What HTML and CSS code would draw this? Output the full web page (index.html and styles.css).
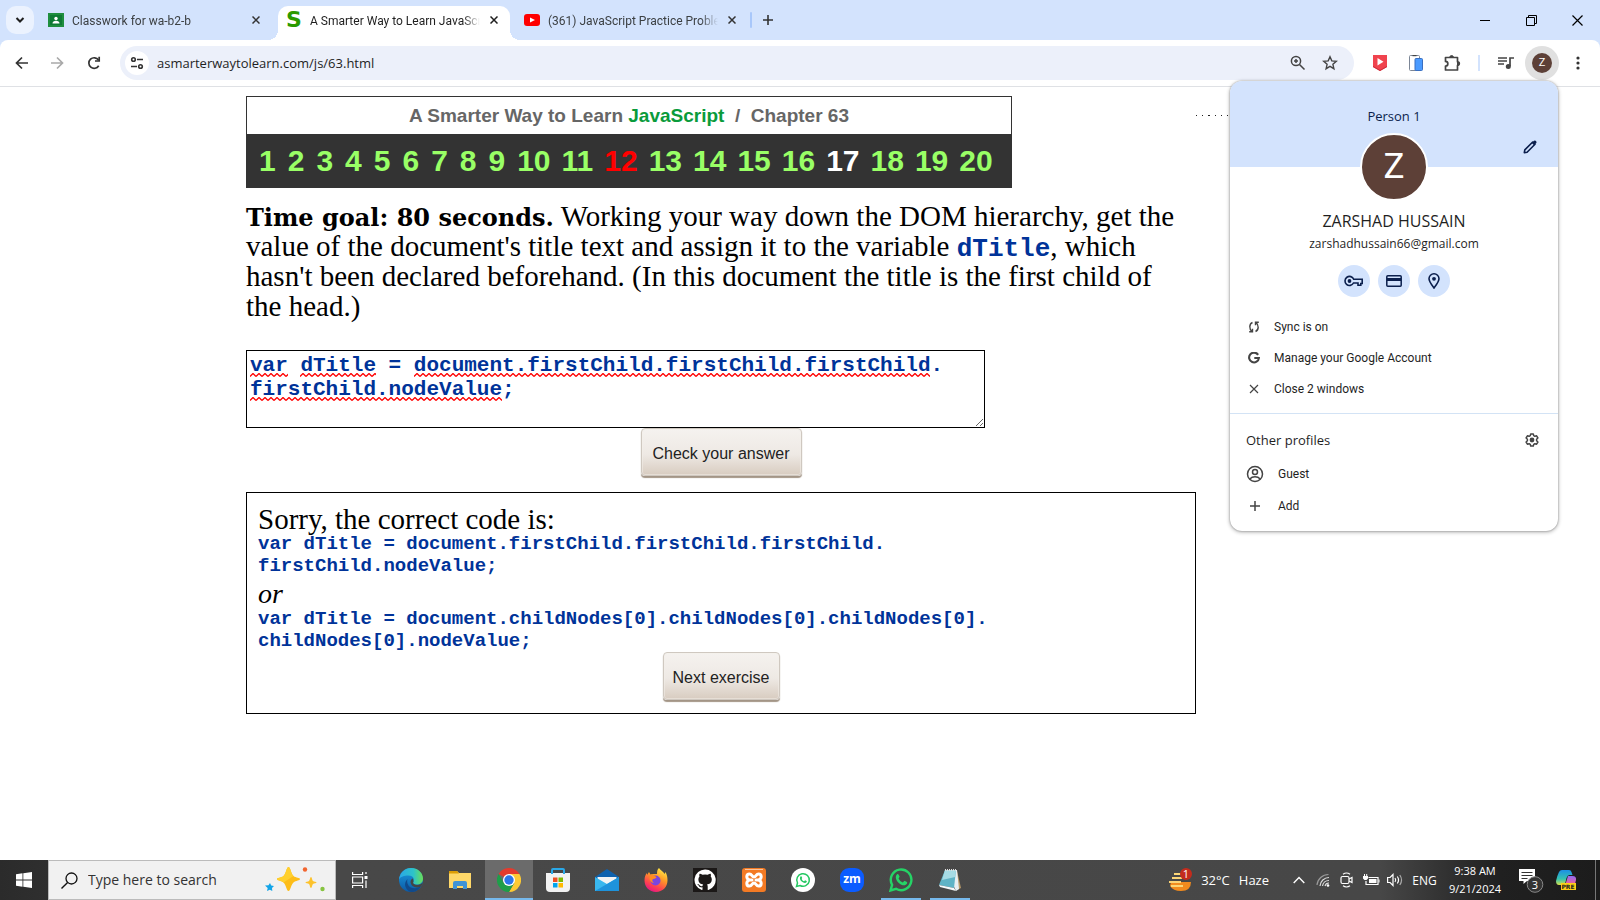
FILE: index.html
```html
<!DOCTYPE html>
<html lang="en">
<head>
<meta charset="utf-8">
<title>A Smarter Way to Learn JavaScript</title>
<link rel="stylesheet" href="styles.css">
</head>
<body>
<header class="browser">
  <div class="tabstrip">
    <button class="tab-search" aria-label="Search tabs"><svg width="10" height="8" viewBox="0 0 10 8"><path d="M1.500 2l3.500 3.500L8.500 2" fill="none" stroke="#1f1f1f" stroke-width="2"/></svg></button>
    <div class="tab">
      <svg width="16" height="16" viewBox="0 0 16 16"><path d="M0 1h16v14H0z" fill="#1e8e3e"/><path d="M2 3h12v10H2z" fill="#0f7a35"/><circle cx="8" cy="6.500" r="1.700" fill="#fff"/><path d="M4.500 11.500c0-2 1.500-2.800 3.500-2.800s3.500.8 3.500 2.800z" fill="#fff"/></svg>
      <span class="tab-title">Classwork for wa-b2-b</span>
      <button class="tab-close" aria-label="Close tab"><svg width="8" height="8" viewBox="0 0 8 8"><path d="M.5.5l7 7m0-7l-7 7" stroke="#333" stroke-width="1.500"/></svg></button>
    </div>
    <div class="tab tab-active">
      <span class="favicon-s" aria-hidden="true">S</span>
      <span class="tab-title">A Smarter Way to Learn JavaScript</span>
      <button class="tab-close" aria-label="Close tab"><svg width="8" height="8" viewBox="0 0 8 8"><path d="M.5.5l7 7m0-7l-7 7" stroke="#1f1f1f" stroke-width="1.500"/></svg></button>
    </div>
    <div class="tab">
      <svg width="16" height="16" viewBox="0 0 16 16"><rect y="2" width="16" height="12" rx="3" fill="#f00"/><path d="M6 5.500l5 2.500-5 2.500z" fill="#fff"/></svg>
      <span class="tab-title">(361) JavaScript Practice Problems</span>
      <button class="tab-close" aria-label="Close tab"><svg width="8" height="8" viewBox="0 0 8 8"><path d="M.5.5l7 7m0-7l-7 7" stroke="#333" stroke-width="1.500"/></svg></button>
    </div>
    <span class="tab-divider"></span>
    <button class="new-tab" aria-label="New tab"><svg width="10" height="10" viewBox="0 0 10 10"><path d="M5 0v10M0 5h10" stroke="#333" stroke-width="1.600"/></svg></button>
    <div class="window-controls">
      <button aria-label="Minimize"><svg width="10" height="10" viewBox="0 0 10 10"><path d="M0 5.500h10" stroke="#000"/></svg></button>
      <button aria-label="Restore"><svg width="11" height="11" viewBox="0 0 11 11"><path d="M.5 2.500h8v8h-8zM2.500 2V.5h8v8H9" fill="none" stroke="#000"/></svg></button>
      <button aria-label="Close"><svg width="11" height="11" viewBox="0 0 11 11"><path d="M.5.5l10 10m0-10l-10 10" stroke="#000" stroke-width="1.200"/></svg></button>
    </div>
  </div>
  <div class="toolbar">
    <div class="nav">
      <button aria-label="Back"><svg width="14" height="14" viewBox="0 0 14 14"><path d="M13 7H2M7 1.500L1.500 7 7 12.500" fill="none" stroke="#333" stroke-width="1.700"/></svg></button>
      <button aria-label="Forward"><svg width="14" height="14" viewBox="0 0 14 14"><path d="M1 7h11M7 1.500L12.500 7 7 12.500" fill="none" stroke="#a9a9a9" stroke-width="1.700"/></svg></button>
      <button class="reload" aria-label="Reload"><svg width="14" height="14" viewBox="0 0 14 14"><path d="M11.700 9.800A5.300 5.300 0 1 1 11.500 4" fill="none" stroke="#333" stroke-width="1.700"/><path d="M12.200.8V5H8" fill="none" stroke="#333" stroke-width="1.700"/></svg></button>
    </div>
    <div class="omnibox">
      <button class="site-info" aria-label="View site information"><svg width="14" height="14" viewBox="0 0 14 14"><g fill="none" stroke="#333" stroke-width="1.600"><circle cx="3.500" cy="3.500" r="1.800"/><path d="M7 3.500h6M1 10.500h6"/><circle cx="10.500" cy="10.500" r="1.800"/></g></svg></button>
      <input class="url" type="text" aria-label="Address" value="asmarterwaytolearn.com/js/63.html">
      <button aria-label="Zoom"><svg width="16" height="16" viewBox="0 0 16 16"><g fill="none" stroke="#444" stroke-width="1.500"><circle cx="6" cy="6" r="4.600"/><path d="M9.500 9.500l5 5M4 6h4M6 4v4"/></g></svg></button>
      <button aria-label="Bookmark this tab"><svg width="16" height="16" viewBox="0 0 16 16"><path d="M8 1.800l1.800 4.100 4.500.4-3.400 3 1 4.400L8 11.400l-3.900 2.300 1-4.400-3.400-3 4.500-.4z" fill="none" stroke="#444" stroke-width="1.400"/></svg></button>
    </div>
    <div class="extensions">
      <button aria-label="Video extension"><svg width="16" height="16" viewBox="0 0 16 16"><path d="M1 0h14v12l-7 4-7-4z" fill="#f0434e"/><path d="M1 11l7 4 7-4v1l-7 4-7-4z" fill="#c92a3a"/><path d="M5.500 3l6 3.700-6 3.700z" fill="#fff"/></svg></button>
      <button aria-label="Mobile view extension"><svg width="16" height="16" viewBox="0 0 16 16"><rect x="1.500" y=".5" width="10" height="15" rx="1" fill="#fff" stroke="#7c8696"/><path d="M4.500.5h4" stroke="#444" stroke-width="1.400"/><rect x="7" y="3.500" width="7.500" height="12" rx="1" fill="#4b9bff" stroke="#3a6fc0"/></svg></button>
      <button aria-label="Extensions"><svg width="18" height="18" viewBox="0 0 18 18"><path d="M2.500 3.500h12v4.300a1.600 1.600 0 0 1 0 3.600V16h-12v-3.900a2.200 2.200 0 0 0 0-4.700z" fill="none" stroke="#444" stroke-width="1.700" stroke-linejoin="round"/><path d="M6.700 3.500a1.900 1.900 0 0 1 3.800 0zM14.500 7.800a1.900 1.900 0 0 1 0 3.700z" fill="#444" stroke="#444"/></svg></button>
      <span class="toolbar-divider"></span>
      <button aria-label="Media controls"><svg width="16" height="14" viewBox="0 0 16 14"><path d="M0 2h9M0 5h9M0 8h6" stroke="#444" stroke-width="1.600"/><path d="M12 10V2h4" fill="none" stroke="#444" stroke-width="1.700"/><circle cx="10.300" cy="10.500" r="2.500" fill="#444"/></svg></button>
      <button class="profile" aria-label="Profile"><span class="avatar-small">Z</span></button>
      <button aria-label="Menu"><svg width="4" height="14" viewBox="0 0 4 14"><g fill="#333"><circle cx="2" cy="2" r="1.600"/><circle cx="2" cy="7" r="1.600"/><circle cx="2" cy="12" r="1.600"/></g></svg></button>
    </div>
  </div>
</header>

<main class="page">
  <div class="lesson">
    <section class="chapter">
      <h1 class="chapter-title">A Smarter Way to Learn <span class="js">JavaScript</span> &nbsp;/&nbsp; Chapter 63</h1>
      <nav class="exercises">
        <a class="digit" href="#1">1</a><a class="digit" href="#2">2</a><a class="digit" href="#3">3</a><a class="digit" href="#4">4</a><a class="digit" href="#5">5</a><a class="digit" href="#6">6</a><a class="digit" href="#7">7</a><a class="digit" href="#8">8</a><a class="digit" href="#9">9</a><a href="#10">10</a><a href="#11">11</a><a href="#12" class="missed">12</a><a href="#13">13</a><a href="#14">14</a><a href="#15">15</a><a href="#16">16</a><a href="#17" class="current">17</a><a href="#18">18</a><a href="#19">19</a><a href="#20">20</a>
      </nav>
    </section>
    <p class="question"><label for="answer"><b>Time goal: 80 seconds.</b> Working your way down the DOM hierarchy, get the value of the document's title text and assign it to the variable <code>dTitle</code>, which hasn't been declared beforehand. (In this document the title is the first child of the head.)</label></p>
    <div class="answer-field">
      <textarea id="answer" class="answer" rows="3">var dTitle = document.firstChild.firstChild.firstChild.
firstChild.nodeValue;</textarea>
      <div class="spelling" aria-hidden="true">
        <div class="spelling-line"><i class="w3"></i><i class="w6"></i><i></i><i class="w41"></i></div>
        <div class="spelling-line"><i class="w20"></i></div>
      </div>
    </div>
    <button class="stone check">Check your answer</button>
    <section class="result">
      <p>Sorry, the correct code is:</p>
      <pre>var dTitle = document.firstChild.firstChild.firstChild.
firstChild.nodeValue;</pre>
      <p><em>or</em></p>
      <pre>var dTitle = document.childNodes[0].childNodes[0].childNodes[0].
childNodes[0].nodeValue;</pre>
      <button class="stone next">Next exercise</button>
    </section>
  </div>
  <svg class="dots" width="40" height="2" viewBox="0 0 40 2"><path d="M0 .5h1M6 .5h1M12 .5h2M19 .5h1M25 .5h1M31 .5h1" stroke="#222" stroke-width="1"/></svg>
</main>

<aside class="popup">
  <div class="popup-head">
    <span>Person 1</span>
    <button class="edit" aria-label="Edit profile"><svg width="14" height="14" viewBox="0 0 14 14"><path d="M1.300 12.700l.5-2.800L9.700 2l2.300 2.300-7.900 7.900z" fill="none" stroke="#0b1f4d" stroke-width="1.600" stroke-linejoin="round"/><path d="M8.800 2.900L11 .7q.8-.6 1.600.1l.7.7q.5.700 0 1.500l-2.200 2.200z" fill="#0b1f4d"/></svg></button>
  </div>
  <div class="avatar">Z</div>
  <div class="name">ZARSHAD HUSSAIN</div>
  <div class="email">zarshadhussain66@gmail.com</div>
  <div class="shortcuts">
    <button aria-label="Passwords"><svg width="20" height="12" viewBox="0 0 20 12"><g fill="none" stroke="#0b1f4d" stroke-width="1.600"><path d="M9.700 4.300H18.200V8.500h-1.400v1.700h-2.800V8H9.500A4.500 4.500 0 1 1 9.700 4.300z"/></g><circle cx="5.500" cy="6" r="1.900" fill="#0b1f4d"/></svg></button>
    <button aria-label="Payment methods"><svg width="16" height="12" viewBox="0 0 16 12"><rect x=".8" y=".8" width="14.400" height="10.400" rx="1" fill="none" stroke="#0b1f4d" stroke-width="1.500"/><path d="M1 3h14v3H1z" fill="#0b1f4d"/></svg></button>
    <button aria-label="Addresses"><svg width="12" height="16" viewBox="0 0 12 16"><path d="M6 15C3 11 1 8.500 1 5.800a5 5 0 0 1 10 0C11 8.500 9 11 6 15z" fill="none" stroke="#0b1f4d" stroke-width="1.600"/><circle cx="6" cy="5.800" r="1.900" fill="#0b1f4d"/></svg></button>
  </div>
  <div class="menu">
    <button><svg width="12" height="12" viewBox="0 0 12 12"><g fill="none" stroke="#444" stroke-width="1.400"><path d="M4.500 1.500C1 3 1 8 4 10.500M4.500 7.800v3H1.200M7.500 10.500C11 9 11 4 8 1.500M7.500 4.200v-3h3.300"/></g></svg>Sync is on</button>
    <button><svg width="12" height="12" viewBox="0 0 12 12"><path d="M10.100 2.800A4.900 4.900 0 1 0 10.900 6H6.300" fill="none" stroke="#444" stroke-width="2.100"/></svg>Manage your Google Account</button>
    <button><svg width="12" height="12" viewBox="0 0 12 12"><path d="M2 2l8 8m0-8l-8 8" stroke="#444" stroke-width="1.200"/></svg>Close 2 windows</button>
  </div>
  <div class="others">
    <div class="others-head"><span>Other profiles</span><button aria-label="Manage profiles"><svg width="14" height="14" viewBox="0 0 14 14"><path d="M5.700.9h2.600l.4 1.700 1.200.7 1.700-.5 1.300 2.200L11.600 6.200v1.600l1.300 1.200-1.300 2.200-1.700-.5-1.200.7-.4 1.700H5.700l-.4-1.700-1.200-.7-1.700.5L1.100 9l1.300-1.200V6.200L1.100 5l1.300-2.200 1.700.5 1.200-.7z" fill="none" stroke="#444" stroke-width="1.500" stroke-linejoin="round"/><circle cx="7" cy="7" r="2.400" fill="#444"/></svg></button></div>
    <button class="other"><svg width="18" height="18" viewBox="0 0 18 18"><g fill="none" stroke="#444" stroke-width="1.500"><circle cx="9" cy="9" r="7.500"/><circle cx="9" cy="7" r="2.500"/><path d="M3.800 14c2.700-3 7.700-3 10.400 0"/></g></svg>Guest</button>
    <button class="other"><svg width="18" height="18" viewBox="0 0 18 18"><path d="M9 4v10M4 9h10" stroke="#444" stroke-width="1.500"/></svg>Add</button>
  </div>
</aside>

<footer class="taskbar">
  <button class="start" aria-label="Start"><svg width="16" height="16" viewBox="0 0 16 16"><path d="M0 2.200l6.500-.9v6.200H0zM7.300 1.200L16 0v7.500H7.300zM0 8.400h6.500v6.300L0 13.800zM7.300 8.400H16V16l-8.700-1.200z" fill="#fff"/></svg></button>
  <div class="search">
    <svg width="17" height="17" viewBox="0 0 17 17"><circle cx="10.500" cy="6.500" r="5.500" fill="none" stroke="#111" stroke-width="1.300"/><path d="M6.600 10.400L.5 16.500" stroke="#111" stroke-width="1.400"/></svg>
    <input type="text" aria-label="Search" placeholder="Type here to search">
    <svg width="60" height="26" viewBox="0 0 60 26"><path d="M23.500 0c2 0 2.500 7 5 9s6.500 1.500 6.500 3-4 1.500-6.500 3.500-3 8.500-5 8.500-2.500-6.500-5-8.500-6.500-2-6.500-3.500 4-1 6.500-3 3-9 5-9z" fill="#fdbd18"/><path d="M23.500 0c2 0 2.500 7 5 9l-10 6.500c-2.500-2-6.500-2-6.500-3.500s4-1 6.500-3 3-9 5-9z" fill="#ffd02e"/><path d="M46 10c1 0 1 3 2 4s3.500.5 3.500 1.500-2.500.5-3.500 1.500-1 4-2 4-1-3-2-4-3.500-.5-3.500-1.500 2.500-.5 3.500-1.500 1-4 2-4z" fill="#fcc22c"/><path d="M5 16l1.200 2.600 2.800.4-2 2 .3 3-2.500-1.300L2 24l.7-3L0 18.500l3.500-.3z" fill="#12a4e8"/><circle cx="40" cy="2.500" r="2.200" fill="#f2652f"/><circle cx="57.500" cy="22" r="2.200" fill="#86c440"/></svg>
  </div>
  <nav class="apps">
    <button class="taskview" aria-label="Task View"><svg width="16" height="16" viewBox="0 0 16 16"><g fill="none" stroke="#fff" stroke-width="1.200"><path d="M.6 0v2.500h10V0M.6 16v-2.500h10V16M.6 5h10v6H.6zM14 0v2M14 8.500V16"/></g><path d="M12.500 4h3v3h-3z" fill="#fff"/></svg></button>
    <button aria-label="Edge"><svg width="24" height="24" viewBox="0 0 24 24"><defs><linearGradient id="ea" x1="0" x2="1"><stop offset="0" stop-color="#2aa7e8"/><stop offset=".6" stop-color="#2dc3c9"/><stop offset="1" stop-color="#6adf57"/></linearGradient><linearGradient id="eb" x1="0" y1="0" x2="0" y2="1"><stop offset="0" stop-color="#1b9de2"/><stop offset="1" stop-color="#0c59a4"/></linearGradient></defs><circle cx="12" cy="12" r="12" fill="url(#eb)"/><path d="M0 11.500C1 4.500 6 0 12 0c7 0 12 5 12 10.500 0 4-3 6-6 6-3.500 0-4.500-1.500-3.800-2.500 1.300-2 .8-6.500-4.700-6.500-4.500 0-8 1-9.500 4z" fill="url(#ea)"/><path d="M8.500 11c-1.500 5 2 10.500 9 9 2-.5 3-1 4.500-2-2 4-6 6-10 6-5-1.500-8.500-8-3.500-13z" fill="#114a8b"/><path d="M14.500 13.500c-1.500 3 3 4.500 7.500 2.500l1.700-1.500-1.200 3.500C18 21 12 19 11.500 14c0-2 1.500-3.500 2.500-3.500z" fill="#444"/></svg></button>
    <button aria-label="File Explorer"><svg width="22" height="18" viewBox="0 0 22 18"><path d="M0 0h8l2 2h12v15H0z" fill="#ffd869"/><path d="M0 0h8l2 2.500H0z" fill="#dd9d05"/><path d="M4 18v-6q0-2 2-2h10q2 0 2 2v6h-4v-3H8v3z" fill="#3f93d6"/></svg></button>
    <button class="app-active" aria-label="Chrome"><svg width="24" height="24" viewBox="0 0 24 24"><path d="M12 12L1.600 6A12 12 0 0 1 22.400 6z" fill="#e33b2e"/><path d="M12 12V6h10.400A12 12 0 0 1 12 24l5.200-9z" fill="#fcc934"/><path d="M12 12l5.200 3L12 24A12 12 0 0 1 1.600 6l5.200 9z" fill="#1e9e49"/><circle cx="12" cy="12" r="6" fill="#fff"/><circle cx="12" cy="12" r="4.700" fill="#2a76ea"/></svg></button>
    <button aria-label="Microsoft Store"><svg width="24" height="24" viewBox="0 0 24 24"><path d="M0 5h24v15q0 4-4 4H4q-4 0-4-4z" fill="#f2f2f2"/><path d="M6 6V2q0-1 1-1h10q1 0 1 1v4" fill="none" stroke="#2aa8e8" stroke-width="2"/><path d="M7 9.500h4.500V14H7z" fill="#f25022"/><path d="M12.500 9.500H17V14h-4.500z" fill="#7fba00"/><path d="M7 15h4.500v4.500H7z" fill="#00a4ef"/><path d="M12.500 15H17v4.500h-4.500z" fill="#ffb900"/></svg></button>
    <button aria-label="Mail"><svg width="24" height="22" viewBox="0 0 24 22"><path d="M0 8L12 0l12 8v4H0z" fill="#0f62ae"/><path d="M2.500 8h19v8h-19z" fill="#f3f3f3"/><path d="M0 8l12 7L24 8v14H0z" fill="#39b7ee"/><path d="M0 22L24 8v14z" fill="#1e93dc"/></svg></button>
    <button aria-label="Firefox"><svg width="24" height="24" viewBox="0 0 24 24"><defs><linearGradient id="fx" x1=".8" y1="0" x2=".3" y2="1"><stop offset="0" stop-color="#fff14a"/><stop offset=".4" stop-color="#ff9a26"/><stop offset=".75" stop-color="#ff4150"/><stop offset="1" stop-color="#e31587"/></linearGradient></defs><path d="M15 0c1 2 5 4 5.500 6l1-2C23 7 23.500 9 23.500 12.500 23.500 19 18.500 24 12 24S.5 19 .5 12.500C.5 9 1.500 6.500 3 5v2l2-3 1.500 2.500C8 5.500 12 6 13 6c0-3 .5-5 2-6z" fill="url(#fx)"/><circle cx="11.500" cy="12.500" r="5" fill="#7a45e0"/><path d="M6 7.500c3-1 6 .5 6.500 2-1 1.500-3 1-4 2-.5 1 0 2.500 1.500 3.500-3.500 0-5.500-4-4-7.500z" fill="#ff8c22"/></svg></button>
    <button aria-label="GitHub"><svg width="24" height="24" viewBox="0 0 24 24"><path d="M0 0h24v24H0z" fill="#1b1817"/><path d="M12 1.500A10.500 10.500 0 0 0 8.800 22c.5.1.700-.2.700-.5v-2.200c-3 .6-3.600-1.200-3.600-1.200-.5-1.200-1.200-1.500-1.200-1.500-1-.7.100-.7.100-.7 1 .1 1.600 1.100 1.600 1.100 1 1.600 2.500 1.200 3.100.9.100-.7.400-1.200.7-1.400-2.300-.3-4.800-1.200-4.800-5.200 0-1.200.4-2.100 1.100-2.800-.1-.3-.5-1.400.1-2.800 0 0 .9-.3 2.900 1.100a10 10 0 0 1 5.200 0c2-1.400 2.900-1.100 2.900-1.100.6 1.400.2 2.500.1 2.800.7.7 1.100 1.600 1.100 2.800 0 4-2.500 4.900-4.800 5.200.4.300.7 1 .7 1.900v3c0 .4.200.7.700.6A10.500 10.500 0 0 0 12 1.500z" fill="#fff"/></svg></button>
    <button aria-label="XAMPP"><svg width="24" height="24" viewBox="0 0 24 24"><rect width="24" height="24" rx="3" fill="#f37a24"/><path d="M3 1.500h18" stroke="#fbc49a"/><g fill="none" stroke="#fff" stroke-width="3" stroke-linecap="round" stroke-linejoin="round"><path d="M7 12C4 10.500 4 6 7.500 6c2.500 0 2.500 3 4.500 3s2-3 4.500-3C20 6 20 10.500 17 12c3 1.500 3 6-.5 6-2.500 0-2.500-3-4.500-3s-2 3-4.500 3C4 18 4 13.500 7 12z"/><path d="M7 12h3M17 12h-3"/></g></svg></button>
    <button aria-label="WhatsApp Web"><svg width="24" height="24" viewBox="0 0 24 24"><circle cx="12" cy="12" r="12" fill="#fff"/><path d="M5.500 18.500l1-3.500a6.300 6.300 0 1 1 2.500 2.500z" fill="none" stroke="#25c862" stroke-width="1.500"/><path d="M9.500 8.500c.7-.7 1.200-.1 1.700 1.400l-.6 1c.6 1.200 1.300 1.900 2.500 2.400l1-1c1.500.6 2 1 1.600 1.700-1 1.700-3.300 1.200-5-.4-1.600-1.500-2.400-3.600-1.200-5.100z" fill="#25c862"/></svg></button>
    <button aria-label="Zoom Workplace"><span class="zm">zm</span></button>
    <button class="app-open" aria-label="WhatsApp"><svg width="24" height="24" viewBox="0 0 24 24"><path d="M1.500 22.500l1.600-5.700a10.300 10.300 0 1 1 4 4z" fill="none" stroke="#25d366" stroke-width="2.400"/><path d="M7.800 6.400c1.100-1.100 1.900-.2 2.800 2.400l-1 1.600c1 2 2.200 3.100 4.200 4l1.600-1.700c2.500 1 3.300 1.600 2.700 2.800-1.600 2.800-5.500 2-8.300-.6-2.700-2.500-4-6-2-8.500z" fill="#25d366"/></svg></button>
    <button class="app-open" aria-label="Notepad"><svg width="24" height="24" viewBox="0 0 24 24"><path d="M19 3l4 17-4 2z" fill="#b99a6a"/><path d="M8 2h11l2 19-3 2z" fill="#e8eef2"/><path d="M7 2h11l-2 18L1 17z" fill="#5fb3c6"/><path d="M7 2h11l-.8 7L4 12z" fill="#a6dbe4"/><path d="M1 17l15 3 2 3L2 19z" fill="#f4f8fa"/><path d="M7 2h12" stroke="#ddd" stroke-width="2" stroke-dasharray="1 1"/></svg></button>
  </nav>
  <div class="tray">
    <button class="weather"><svg width="24" height="24" viewBox="0 0 24 24"><path d="M3 14h20q0 9-10 9Q5 23 2 18z" fill="#f28b1e"/><path d="M6 6h9M4 10h10M1 14h12M3 18h12" stroke="#fbd577" stroke-width="2"/><circle cx="18" cy="6" r="6" fill="#c42b1c"/><text x="18" y="10" class="badge-text">1</text></svg><span>32°C</span><span>Haze</span></button>
    <button class="tray-cell" aria-label="Show hidden icons"><svg width="12" height="8" viewBox="0 0 12 8"><path d="M.7 7L6 1.500 11.300 7" fill="none" stroke="#fff" stroke-width="1.400"/></svg></button>
    <button class="tray-cell" aria-label="Network"><svg width="14" height="14" viewBox="0 0 14 14"><g fill="none" stroke-width="1.200"><path d="M1 12A11.500 11.500 0 0 1 12.500 1.500" stroke="#999"/><path d="M4 13A9 9 0 0 1 13 4.500M6.500 13A6.500 6.500 0 0 1 13 7.500M9 13a4 4 0 0 1 4-3" stroke="#ddd"/></g><circle cx="12" cy="12.500" r="1.300" fill="#fff"/></svg></button>
    <button class="tray-cell" aria-label="Meet Now"><svg width="14" height="16" viewBox="0 0 14 16"><g fill="none" stroke="#fff" stroke-width="1.200"><rect x="1" y="4.500" width="8" height="7" rx="1.500"/><path d="M9 7l3-1.500v5L9 9M3 2.200Q6.500-.2 10 2.200M3 13.800q3.500 2.400 7 0"/></g></svg></button>
    <button class="tray-cell" aria-label="Battery"><svg width="17" height="12" viewBox="0 0 17 12"><path d="M5.500 3.500H15v7H3V7" fill="none" stroke="#fff" stroke-width="1.200"/><path d="M6 5h7.500v4H6zM15.500 5.500h1v3h-1zM0 2h5v2.500L3.500 6h-2L0 4.500zM1 0h1v2H1zM3.200 0h1v2h-1z" fill="#fff"/></svg></button>
    <button class="tray-cell" aria-label="Volume"><svg width="16" height="14" viewBox="0 0 16 14"><path d="M.6 4.500h2.500L6 1.500v11L3.100 9.500H.6zM8 5q1.500 2 0 4M10.300 3.500q2.500 3.500 0 7" fill="none" stroke="#fff" stroke-width="1.200"/><path d="M12.800 2q3.500 5 0 10" fill="none" stroke="#aaa" stroke-width="1.200"/></svg></button>
    <button class="lang">ENG</button>
    <button class="clock"><span>9:38 AM</span><span>9/21/2024</span></button>
    <button class="notifications" aria-label="3 notifications"><svg width="26" height="26" viewBox="0 0 26 26"><path d="M1 2h16v12H9l-3.500 3v-3H1z" fill="#fff"/><path d="M3.500 5.500h11M3.500 8.500h11M3.500 11.500h6" stroke="#333" stroke-width="1"/><circle cx="17" cy="17.500" r="7.800" fill="#333" stroke="#888"/><text x="17" y="21.500" class="badge-text">3</text></svg></button>
    <button class="copilot" aria-label="Copilot"><svg width="22" height="20" viewBox="0 0 22 20"><defs><linearGradient id="ca" x1="0" y1="0" x2="0" y2="1"><stop offset="0" stop-color="#1c8fe6"/><stop offset=".6" stop-color="#35c2b0"/><stop offset="1" stop-color="#d8e24a"/></linearGradient><linearGradient id="cb" x1="0" y1="0" x2="0" y2="1"><stop offset="0" stop-color="#8f6bf2"/><stop offset="1" stop-color="#f0609a"/></linearGradient></defs><path d="M6 0h7q2 0 2.500 2l1 3h-3q-2 0-3 3l-1 4q-.5 3-3 3H3q-3 0-3-4 1-5 3-9 1-2 3-2z" fill="url(#ca)"/><path d="M12 6h4.500q4 0 3.500 4l-1 4H9.500z" fill="url(#cb)"/><path d="M5 13h15v7H5z" fill="#ffcf17"/><text x="12" y="19" class="pre">PRE</text></svg></button>
    <span class="show-desktop"></span>
  </div>
</footer>
</body>
</html>
```
FILE: styles.css
```css
* { box-sizing: border-box; }
body {
  margin: 0;
  min-height: 100vh;
  display: flex;
  flex-direction: column;
  position: relative;
  background: #fff;
  font-family: "Open Sans", "Noto Sans", sans-serif;
  font-size: 12px;
  color: #1f1f1f;
}
button {
  border: 0;
  padding: 0;
  margin: 0;
  background: none;
  color: inherit;
  font: inherit;
  display: flex;
  align-items: center;
  justify-content: center;
  flex-shrink: 0;
}
svg { display: block; flex-shrink: 0; }

/* Browser frame */
.browser { background: #d3e3fd; }
.tabstrip { display: flex; height: 40px; padding: 6px 0 0 6px; gap: 6px; }
.tab-search { width: 28px; height: 28px; border-radius: 10px; background: #ebf2fe; }
.tab {
  position: relative;
  display: flex;
  align-items: center;
  gap: 8px;
  width: 232px;
  height: 34px;
  padding: 0 10px 6px 8px;
  font-family: Roboto, "Open Sans", sans-serif;
  color: #3c4043;
}
.tab-active { background: #fff; border-radius: 10px 10px 0 0; color: #1f1f1f; }
.tab-active::before, .tab-active::after {
  content: "";
  position: absolute;
  bottom: 0;
  width: 10px;
  height: 10px;
}
.tab-active::before { left: -10px; background: radial-gradient(circle at 0 0, transparent 10px, #fff 10px); }
.tab-active::after { right: -10px; background: radial-gradient(circle at 100% 0, transparent 10px, #fff 10px); }
.tab-title {
  flex: 1;
  overflow: hidden;
  padding-top: 2px;
  white-space: nowrap;
  -webkit-mask-image: linear-gradient(90deg, #000 90%, transparent);
  mask-image: linear-gradient(90deg, #000 90%, transparent);
}
.tab-close { width: 12px; height: 16px; }
.favicon-s {
  width: 16px;
  font: bold 22px/16px "DejaVu Sans", sans-serif;
  color: #2a9a00;
}
.tab-divider { width: 2px; height: 16px; margin: 6px 6px 0 -4px; background: #a8c7fa; border-radius: 1px; align-self: flex-start; }
.new-tab { width: 20px; height: 28px; margin-left: -6px; }
.window-controls { display: flex; margin: -6px 0 0 auto; }
.window-controls button { width: 46px; height: 40px; }

.toolbar {
  display: flex;
  align-items: center;
  height: 47px;
  padding: 0 5px;
  background: #fff;
  border-bottom: 1px solid #dfe1e5;
  border-radius: 8px 8px 0 0;
}
.nav { display: flex; gap: 1px; margin-right: 9px; }
.nav button, .extensions button { width: 34px; height: 34px; }
.nav .reload { margin-left: 2px; }
.omnibox {
  flex: 1;
  display: flex;
  align-items: center;
  height: 34px;
  padding: 0 8px 0 5px;
  border-radius: 17px;
  background: #ecf0fa;
}
.omnibox button { width: 32px; height: 32px; }
.omnibox .site-info { width: 24px; height: 24px; border-radius: 12px; background: #fff; }
.url {
  flex: 1;
  min-width: 0;
  margin-left: 8px;
  padding: 0;
  border: 0;
  background: none;
  font: 13px/20px "Open Sans", "Noto Sans", sans-serif;
  color: #1f1f1f;
}
.extensions { display: flex; align-items: center; gap: 2px; margin-left: 9px; }
.toolbar-divider { width: 2px; height: 16px; margin: 0 7px; background: #d3e3fd; }
.extensions .profile { background: #e0e0e0; border-radius: 17px; }
.avatar-small {
  width: 20px;
  height: 20px;
  border-radius: 10px;
  background: #5d4037;
  color: #fff;
  font: 11px/20px Roboto, sans-serif;
  text-align: center;
}

/* Lesson page */
.page { flex: 1; display: flex; align-items: flex-start; padding: 9px 0 0 246px; }
.lesson { width: 950px; font-family: "Liberation Serif", serif; font-size: 29px; line-height: 30px; color: #000; }
.chapter { width: 766px; border: 1px solid #333; background: #333; }
.chapter-title {
  margin: 0;
  background: #fff;
  font: bold 19px/37px "Liberation Sans", sans-serif;
  color: #666;
  text-align: center;
}
.chapter-title .js { color: #0a9b3b; }
.exercises {
  display: flex;
  gap: 11px;
  padding: 1px 0 1px 12px;
  font: bold 30px/51px "Liberation Sans", sans-serif;
}
.exercises a { color: #9f6; text-decoration: none; }
.exercises .digit { margin-right: 1px; }
.exercises .missed { color: #f00; }
.exercises .current { color: #fff; }
.question { margin: 13px 0 29px; padding-right: 12px; }
.question b { font-family: "DejaVu Serif", serif; font-size: 24px; line-height: 24px; }
.question code { font: bold 26px/24px "Liberation Mono", monospace; color: #039; }
.answer-field { position: relative; width: 739px; font: bold 21px/24px "Liberation Mono", monospace; }
.answer {
  display: block;
  width: 100%;
  height: 78px;
  margin: 0;
  padding: 3px;
  border: 1px solid #000;
  background: #fff;
  font: inherit;
  color: #039;
  resize: vertical;
  overflow: hidden;
}
.spelling { position: absolute; left: 4px; top: 3px; pointer-events: none; }
.spelling-line { display: flex; align-items: flex-end; gap: 1ch; height: 24px; }
.spelling-line i {
  width: 1ch;
  height: 4px;
}
.spelling-line .w3, .spelling-line .w6, .spelling-line .w41, .spelling-line .w20 {
  background: url("data:image/svg+xml,%3Csvg xmlns='http://www.w3.org/2000/svg' width='6' height='4'%3E%3Cpath d='M0 3.500L3 .5L6 3.500' fill='none' stroke='%23f00' stroke-width='1.300'/%3E%3C/svg%3E") repeat-x;
}
.spelling-line .w3 { width: 3ch; }
.spelling-line .w6 { width: 6ch; }
.spelling-line .w41 { width: 41ch; }
.spelling-line .w20 { width: 20ch; }
.stone {
  margin: 0 auto;
  height: 48px;
  padding-top: 3px;
  border: 1px solid #cfc8c0;
  border-radius: 4px;
  background: linear-gradient(#f5f2ef, #eee9e4 55%, #d8ccc0);
  box-shadow: inset 0 0 0 1px #f4efea80, 0 2px 1px #a39586;
  font: 16px/20px "Liberation Sans", sans-serif;
  color: #222;
}
.check { width: 161px; }
.next { width: 117px; }
.result {
  margin-top: 16px;
  padding: 12px 11px 13px;
  border: 1px solid #000;
}
.result p { margin: 0; line-height: 28px; }
.result em { font-size: 28px; }
.result pre { margin: 0 0 2px; font: bold 19px/22px "Liberation Mono", monospace; color: #039; }
.result pre + .stone { margin-top: -2px; }
.dots { margin-top: 19px; }

/* Profile menu */
.popup {
  position: absolute;
  right: 42px;
  top: 81px;
  width: 328px;
  padding-bottom: 9px;
  border-radius: 12px;
  background: #fff;
  box-shadow: 0 0 2px #0005, 0 1px 4px #0005;
  overflow: hidden;
  text-align: center;
}
.popup-head {
  position: relative;
  height: 86px;
  padding-top: 26px;
  background: #d3e3fd;
  font-size: 13px;
  line-height: 18px;
  font-weight: 500;
  color: #0b1f4d;
}
.edit { position: absolute; right: 21px; bottom: 13px; }
.avatar {
  position: relative;
  width: 68px;
  height: 68px;
  margin: -34px auto 0;
  border: 2px solid #fff;
  border-radius: 34px;
  background: #5d4037;
  color: #fff;
  font: 35px/64px Roboto, sans-serif;
}
.name { margin-top: 8px; font-size: 16px; line-height: 24px; font-weight: 500; }
.email { margin-top: 1px; font-size: 12px; line-height: 20px; }
.shortcuts { display: flex; justify-content: center; gap: 8px; margin-top: 11px; }
.shortcuts button { width: 32px; height: 32px; border-radius: 16px; background: #d3e3fd; }
.menu { display: flex; flex-direction: column; margin-top: 14px; padding: 0 18px 9px; border-bottom: 1px solid #d3e3f5; }
.menu button, .other {
  justify-content: flex-start;
  height: 31px;
  font-family: Roboto, "Open Sans", sans-serif;
  font-size: 12px;
}
.menu button { gap: 14px; }
.others { padding: 14px 16px 0; }
.others-head { display: flex; align-items: center; justify-content: space-between; height: 24px; margin-bottom: 6px; padding-right: 3px; font-size: 13px; }
.other { gap: 14px; height: 32px; width: 100%; }

/* Taskbar */
.taskbar {
  display: flex;
  height: 40px;
  background: linear-gradient(90deg, #2b2b2b 0, #2f2f2f 48px, #484848 340px, #474747 1380px, #202020 1500px, #1c1c1c);
  color: #fff;
}
.start { width: 48px; }
.search {
  display: flex;
  align-items: center;
  width: 288px;
  padding: 0 10px 0 12px;
  border: 1px solid #bbb;
  background: #f1f1f1;
}
.search input {
  flex: 1;
  min-width: 0;
  margin-left: 10px;
  padding: 0;
  border: 0;
  background: none;
  font: 14px/20px "Open Sans", "Noto Sans", sans-serif;
}
.search input::placeholder { color: #333; opacity: 1; }
.apps { display: flex; gap: 1px; }
.apps button { width: 48px; height: 40px; }
.apps .taskview { margin-right: 2px; }
.apps .app-active { background: linear-gradient(#76b9ed, #76b9ed) bottom / 100% 2px no-repeat #6b6b6b; }
.apps .app-open { background: linear-gradient(#76b9ed, #76b9ed) bottom / 40px 2px no-repeat; }
.zm {
  width: 24px;
  height: 24px;
  border-radius: 9px;
  background: #0b5cff;
  font: bold 12px/22px "Open Sans", sans-serif;
  text-align: center;
}
.tray { display: flex; align-items: center; margin-left: auto; }
.tray button { height: 40px; }
.weather { gap: 9px; margin-right: 18px; font-size: 13px; }
.badge-text { font: 11px "Open Sans", sans-serif; fill: #fff; text-anchor: middle; }
.tray-cell { width: 24px; }
.lang { width: 35px; font-size: 12px; }
.clock { width: 66px; flex-direction: column; font-size: 11px; line-height: 18px; }
.notifications { width: 45px; }
.copilot { width: 28px; }
.pre { font: bold 6px "DejaVu Sans", sans-serif; fill: #222; text-anchor: middle; }
.show-desktop { width: 5px; height: 40px; margin-left: 14px; border-left: 1px solid #777; }
```
